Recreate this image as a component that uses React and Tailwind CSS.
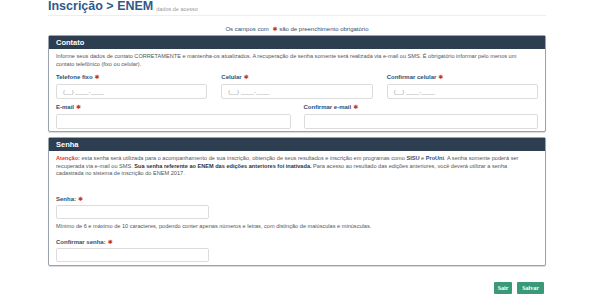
import React from "react";

const Req = () => (
  <span className="ml-[2px] inline-block align-baseline font-['DejaVu_Sans',sans-serif] text-[6px] leading-none text-[#c0392b]">
    ✱
  </span>
);

const Field = ({ label, placeholder, h = "h-[15px]", gap = "mt-[3px]" }) => (
  <div className="flex flex-col">
    <label className="h-[8px] overflow-visible whitespace-nowrap text-[6px] font-bold leading-[8px] text-[#2f4f73]">
      {label}
      <Req />
    </label>
    <div
      className={
        "flex items-center rounded-[2px] border border-[#dcdcdc] bg-white px-[6px] text-[6px] leading-none text-[#9a9a9a] " +
        h +
        " " +
        gap
      }
    >
      {placeholder}
    </div>
  </div>
);

const Panel = ({ title, children, bodyClass }) => (
  <div className="rounded-[2px] border border-[#9aa3ab] bg-white shadow-[0_1px_1px_rgba(0,0,0,0.15)]">
    <div className="flex h-[13px] items-center bg-[#2c3e50] px-[7px] text-[7.5px] font-bold leading-none text-white">
      {title}
    </div>
    <div className={"px-[7px] " + bodyClass}>{children}</div>
  </div>
);

export default function App() {
  const phone = "(__) ____-____";
  return (
    <div className="h-[300px] w-[600px] overflow-hidden bg-white font-['Liberation_Sans',Arial,sans-serif]">
      <div className="ml-[48px] w-[498px]">
        <div className="flex h-[16px] items-end border-b border-[#eeeeee] pb-[3px]">
          <span className="text-[12.5px] font-bold leading-none text-[#2d5b8c]">Inscrição &gt; ENEM</span>
          <span className="ml-[3px] text-[5.5px] leading-none text-[#9a9a9a]">dados de acesso</span>
        </div>
        <div className="mt-[9px] h-[8px] text-center text-[6px] leading-[8px] text-[#2f4f73]">
          Os campos com <Req /> são de preenchimento obrigatório
        </div>
        <div className="mt-[2px]">
          <Panel title="Contato" bodyClass="pt-[4px] pb-[2px]">
            <p className="whitespace-nowrap text-[5.6px] leading-[7.5px] text-[#555]">
              Informe seus dados de contato CORRETAMENTE e mantenha-os atualizados. A recuperação de senha somente será
              realizada via e-mail ou SMS. É obrigatório informar pelo menos um
              <br />
              contato telefônico (fixo ou celular).
            </p>
            <div className="mt-[5px] grid grid-cols-3 gap-x-[14px]">
              <Field label="Telefone fixo" placeholder={phone} />
              <Field label="Celular" placeholder={phone} />
              <Field label="Confirmar celular" placeholder={phone} />
            </div>
            <div className="mt-[4px] grid grid-cols-2 gap-x-[13px]">
              <Field label="E-mail" />
              <Field label="Confirmar e-mail" />
            </div>
          </Panel>
        </div>
        <div className="mt-[5px]">
          <Panel title="Senha" bodyClass="pt-[4px] pb-[3px]">
            <p className="whitespace-nowrap text-[5.6px] leading-[7.5px] text-[#555]">
              <span className="font-bold text-[#e03a2f]">Atenção:</span> esta senha será utilizada para o acompanhamento de sua
              inscrição, obtenção de seus resultados e inscrição em programas como <b className="text-[#2f4f73]">SISU</b> e{" "}
              <b className="text-[#2f4f73]">ProUni</b>. A senha somente poderá ser
              <br />
              recuperada via e-mail ou SMS.{" "}
              <b className="text-[#333]">Sua senha referente ao ENEM das edições anteriores foi inativada.</b> Para acesso ao
              resultado das edições anteriores, você deverá utilizar a senha
              <br />
              cadastrada no sistema de inscrição do ENEM 2017.
            </p>
            <div className="mt-[17px] w-[153px]">
              <Field label="Senha:" h="h-[14px]" gap="mt-[2px]" />
            </div>
            <p className="mt-[3px] text-[5.6px] leading-[8px] text-[#555]">
              Mínimo de 6 e máximo de 10 caracteres, podendo conter apenas números e letras, com distinção de maiúsculas e minúsculas.
            </p>
            <div className="mt-[8px] w-[153px]">
              <Field label="Confirmar senha:" h="h-[14px]" gap="mt-[2px]" />
            </div>
          </Panel>
        </div>
        <div className="mt-[16px] flex justify-end gap-[5px] pr-[2px]">
          <button className="flex h-[12px] w-[18px] items-center justify-center rounded-[1px] bg-[#3a9a78] font-['Liberation_Serif',serif] text-[6px] font-bold leading-none text-white">
            Sair
          </button>
          <button className="flex h-[12px] w-[27px] items-center justify-center rounded-[1px] bg-[#3a9a78] font-['Liberation_Serif',serif] text-[6px] font-bold leading-none text-white">
            Salvar
          </button>
        </div>
      </div>
    </div>
  );
}
